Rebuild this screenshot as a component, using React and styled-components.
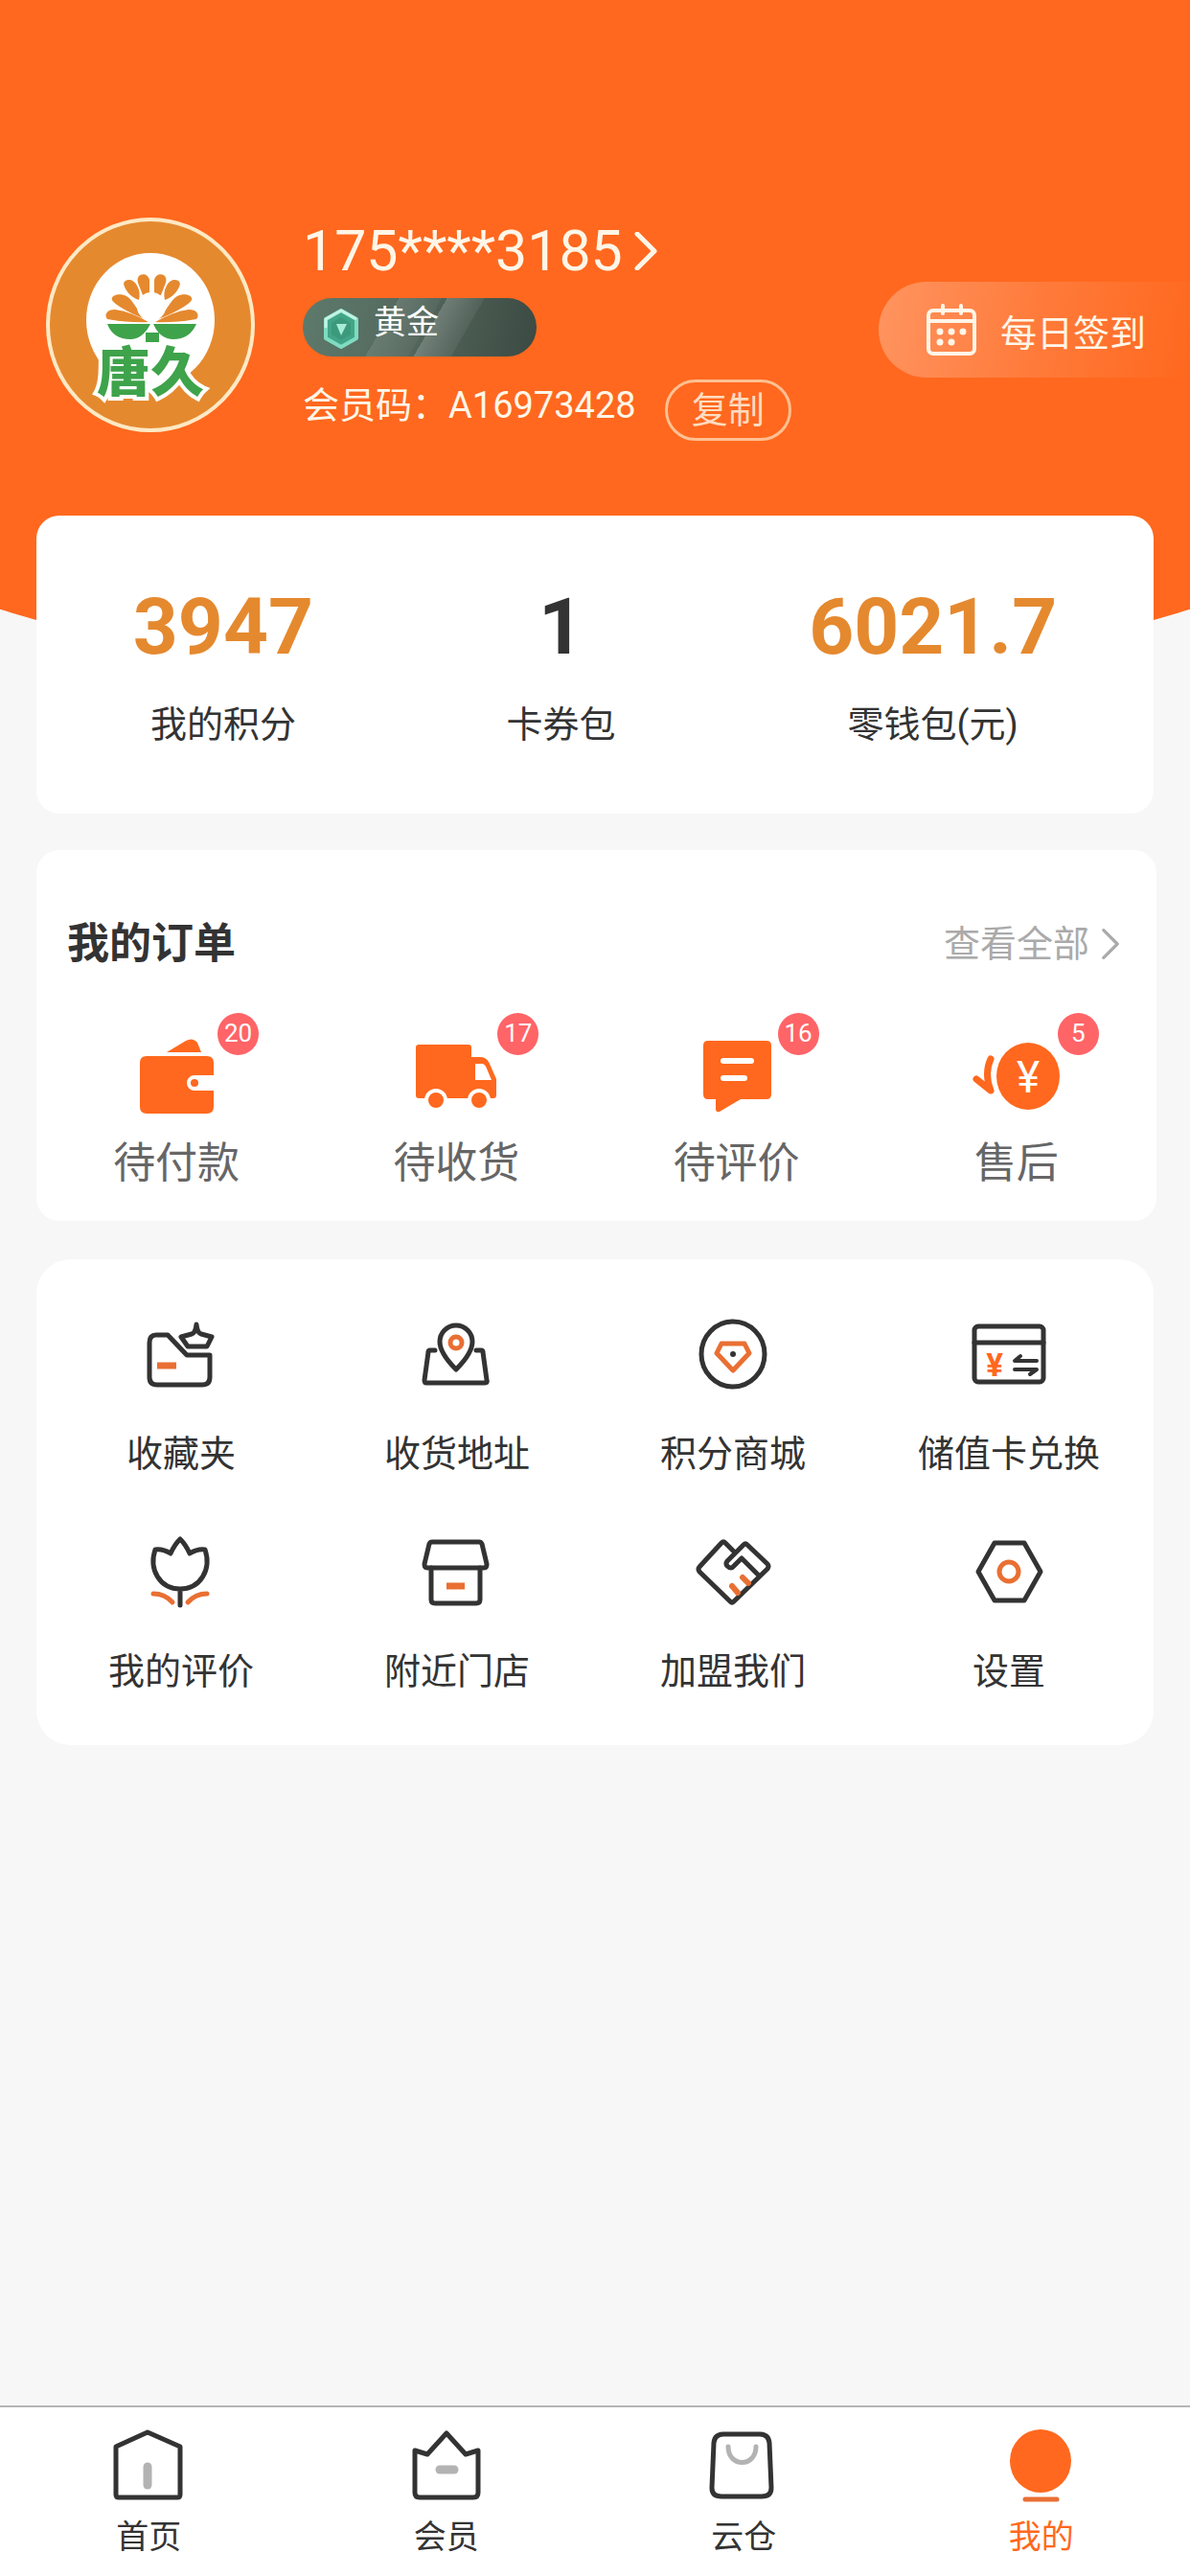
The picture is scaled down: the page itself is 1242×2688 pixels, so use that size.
import styled, { createGlobalStyle } from 'styled-components';

const GlobalStyle = createGlobalStyle`
  * {
    box-sizing: border-box;
  }

  body {
    margin: 0;
    background: #f7f7f7;
    color: #333;
    font-family: Roboto, 'Noto Sans CJK SC', sans-serif;
    font-size: 38px;
  }

  a {
    color: inherit;
    text-decoration: none;
  }

  button {
    padding: 0;
    border: 0;
    background: none;
    color: inherit;
    font: inherit;
    cursor: pointer;
  }

  svg {
    display: block;
    flex: none;
  }
`;

const Page = styled.div`
  display: flex;
  flex-direction: column;
  min-height: 100vh;
`;

const Hero = styled.header`
  display: flex;
  align-items: flex-start;
  padding: 227px 0 265px 48px;
  background: #ff681e;
  color: #fff6e8;
  clip-path: ellipse(104% 100% at 50% 0);
`;

const Info = styled.div`
  margin-left: 50px;
  padding-top: 2px;
`;

const Phone = styled.a`
  display: flex;
  align-items: center;
  gap: 12px;
  font-size: 59px;
  line-height: 66px;
`;

const Level = styled.div`
  display: flex;
  align-items: flex-start;
  gap: 13px;
  width: 244px;
  height: 61px;
  margin: 16px 0 24px;
  padding-left: 20px;
  border-radius: 31px;
  background:
    linear-gradient(120deg, transparent 36%, rgba(255, 255, 255, 0.1) 36%, rgba(255, 255, 255, 0.04) 52%, transparent 52%),
    linear-gradient(120deg, transparent 54%, rgba(255, 255, 255, 0.18) 54%, rgba(255, 255, 255, 0.06) 68%, transparent 68%),
    linear-gradient(100deg, #5d7a6c, #55685e 45%, #3b4a42);
  color: #fff;
  font-size: 34px;
  line-height: 50px;

  svg {
    margin-top: 9px;
  }
`;

const CodeRow = styled.div`
  display: flex;
  align-items: flex-start;
  gap: 30px;
  line-height: 54px;
`;

const CopyButton = styled.button`
  width: 132px;
  height: 64px;
  border: 3px solid #ffc093;
  border-radius: 32px;
  color: #ffdcc0;
`;

const SignIn = styled.button`
  display: flex;
  align-items: center;
  gap: 24px;
  height: 100px;
  margin: 67px 0 0 auto;
  padding: 0 46px 0 49px;
  border-radius: 50px 0 0 50px;
  background: linear-gradient(100deg, #ff9460, #ff7b3b 50%, #ff681e);
`;

const Card = styled.section`
  margin: 0 38px;
  border-radius: ${({ $radius = 24 }) => $radius}px;
  background: #fff;
`;

const StatsCard = styled(Card)`
  position: relative;
  display: flex;
  justify-content: space-around;
  margin-top: -187px;
  padding: 76px 0 71px;
`;

const Stat = styled.a`
  display: flex;
  flex-direction: column;
  align-items: center;
  gap: 40px;
  line-height: 44px;
`;

const StatValue = styled.strong`
  color: ${({ $color }) => $color};
  font-size: 82px;
  line-height: 80px;
`;

const OrdersCard = styled(Card)`
  margin: 38px 35px 0 38px;
  padding: 68px 0 30px;
`;

const OrdersHead = styled.div`
  display: flex;
  justify-content: space-between;
  align-items: center;
  padding: 0 38px 0 32px;
  line-height: 60px;
`;

const OrdersTitle = styled.h2`
  margin: 0;
  font-size: 44px;
`;

const MoreLink = styled.a`
  display: flex;
  align-items: center;
  gap: 12px;
  color: #aaa;
`;

const Columns = styled.nav`
  display: grid;
  grid-template-columns: repeat(4, 1fr);
`;

const OrderColumns = styled(Columns)`
  margin-top: 65px;
`;

const OrderItem = styled.a`
  display: flex;
  flex-direction: column;
  align-items: center;
  gap: 20px;
  color: #666;
  font-size: 44px;
  line-height: 60px;
`;

const OrderIcon = styled.span`
  position: relative;
`;

const Badge = styled.span`
  position: absolute;
  top: -23px;
  left: 91px;
  width: 43px;
  height: 44px;
  border-radius: 50%;
  background: #ff6467;
  color: #fff;
  font-size: 26px;
  line-height: 42px;
  text-align: center;
`;

const ServicesCard = styled(Card)`
  margin-top: 40px;
  padding: 59px 7px 52px;
`;

const ServiceColumns = styled(Columns)`
  row-gap: 58px;
`;

const ServiceItem = styled.a`
  display: flex;
  flex-direction: column;
  align-items: center;
  gap: 39px;
  line-height: 50px;
`;

const TabBar = styled(Columns)`
  margin-top: auto;
  padding: 18px 0;
  border-top: 2px solid #b5b5b5;
  background: #fff;
`;

const Tab = styled.a`
  display: flex;
  flex-direction: column;
  align-items: center;
  gap: 10px;
  color: ${({ $active }) => ($active ? '#ff681e' : '#333')};
  font-size: 34px;
  line-height: 46px;
`;

const Chevron = ({ width, height, stroke }) => (
  <svg width={width} height={height} viewBox="0 0 24 40" fill="none" stroke="currentColor" strokeWidth={stroke}>
    <path d="M3 2 21 20 3 38" strokeLinecap="round" strokeLinejoin="round" />
  </svg>
);

const Logo = () => (
  <svg width="218" height="224" viewBox="0 0 218 224" role="img" aria-label="唐久">
    <ellipse cx="109" cy="112" rx="107" ry="110" fill="#e5892f" stroke="#ffe9c4" strokeWidth="4" />
    <ellipse cx="109" cy="107" rx="67" ry="70" fill="#fff" />
    <g fill="#e5892f">
      {[1, -1].map((side) => (
        <g key={side} transform={side === 1 ? undefined : 'translate(221 0) scale(-1 1)'}>
          <path d="M101 81 96 68C93 58 106 56 108 65L108 81Z" />
          <path d="M97 86C88 83 82 75 81 69 82 64 91 63 95 71Q99 78 97 86Z" />
          <path d="M104 106C90 101 71 91 69 86 67 81 77 78 84 82 91 86 94 96 104 106Z" />
          <path d="M107 109Q88 110 64 106C60 101 64 96 72 96Q88 98 107 109Z" />
        </g>
      ))}
    </g>
    <circle cx="110" cy="93" r="15" fill="#fff" />
    <g fill="#3ea34a">
      <path d="M64 111H109Q101 127 88 127 70 127 64 111ZM112 111H157Q150 127 133 127 119 127 112 111Z" />
      <path d="M104 120H118V130H104Z" />
    </g>
    <text
      x="53"
      y="181"
      fontFamily="'Noto Sans CJK SC', sans-serif"
      fontSize="56"
      fontWeight="900"
      fill="#3ea34a"
      stroke="#fff"
      strokeWidth="8"
      paintOrder="stroke"
    >
      唐久
    </text>
  </svg>
);

const LevelGem = () => (
  <svg width="41" height="46" viewBox="0 0 41 46">
    <path d="M20 4 36 13V33L20 42 4 33V13Z" fill="#43a587" stroke="#7fdcc0" strokeWidth="4" strokeLinejoin="round" />
    <path d="M4 22V13L20 4 36 13" fill="none" stroke="#c5f3e5" strokeWidth="3" strokeLinejoin="round" />
    <path d="M20 11 30 17V29L20 35 10 29V17Z" fill="#3c9a7c" />
    <path d="M15 18 26 18 20 30Z" fill="#a8ecd8" />
  </svg>
);

const CalendarIcon = () => (
  <svg width="54" height="54" viewBox="0 0 54 54" fill="none" stroke="currentColor" strokeWidth="4">
    <rect x="3" y="7" width="48" height="45" rx="5" />
    <path d="M3 18H51M18 2V10M37 2V10" strokeLinecap="round" />
    <g fill="currentColor" stroke="none">
      <circle cx="15" cy="29" r="3.5" />
      <circle cx="27" cy="29" r="3.5" />
      <circle cx="39" cy="29" r="3.5" />
      <circle cx="15" cy="40" r="3.5" />
      <circle cx="27" cy="40" r="3.5" />
    </g>
  </svg>
);

const ORANGE = '#ff681e';
const ACCENT = '#e96f33';
const GREY = '#b3b3b3';

const orders = [
  {
    label: '待付款',
    count: 20,
    icon: (
      <>
        <path d="M38 18 58 6Q65 2 70 8L74 18Z" />
        <path d="M17 22H80Q87 22 87 29V42H67A8 8 0 0 0 67 58H87V75Q87 82 80 82H17Q10 82 10 75V29Q10 22 17 22Z" />
        <circle cx="67" cy="50" r="4" />
      </>
    ),
  },
  {
    label: '待收货',
    count: 17,
    icon: (
      <>
        <path d="M9 10H61Q64 10 64 13V23H73Q80 23 83 30L90 46V63Q90 66 87 66H9Q6 66 6 63V13Q6 10 9 10Z" />
        <path d="M68 30H75Q78 30 80 35L85 47H68Z" fill="#fff" />
        <circle cx="27" cy="68" r="10" stroke="#fff" strokeWidth="4" />
        <circle cx="72" cy="68" r="10" stroke="#fff" strokeWidth="4" />
      </>
    ),
  },
  {
    label: '待评价',
    count: 16,
    icon: (
      <>
        <path d="M18 6H79Q84 6 84 11V62Q84 67 79 67H52L30 80Q26 81 26 77V67H18Q13 67 13 62V11Q13 6 18 6Z" />
        <path d="M34 27H63M34 45H56" stroke="#fff" strokeWidth="6" strokeLinecap="round" />
      </>
    ),
  },
  {
    label: '售后',
    count: 5,
    icon: (
      <>
        <ellipse cx="60" cy="43" rx="33" ry="35" />
        <path
          d="M21 25Q14 40 21 58L6 46"
          fill="none"
          stroke={ORANGE}
          strokeWidth="7"
          strokeLinecap="round"
          strokeLinejoin="round"
        />
        <text x="60" y="60" fill="#fff" fontSize="46" textAnchor="middle">
          ¥
        </text>
      </>
    ),
  },
];

const services = [
  {
    label: '收藏夹',
    icon: (
      <>
        <path d="M14 20H26L46 41H70V64Q70 72 62 72H15Q7 72 7 64V28Q7 20 14 20Z" />
        <path d="M56 9Q57 18 61 19L72 22 67 32H47L40 22 51 19Q55 18 56 9Z" />
        <path d="M15 52H35" stroke={ACCENT} strokeWidth="7" strokeLinecap="butt" />
      </>
    ),
  },
  {
    label: '收货地址',
    icon: (
      <>
        <path d="M39 56Q22 39 22 27A17 17 0 0 1 56 27Q56 39 39 56Z" />
        <path d="M17 36H12Q10 36 10 38L6 67Q6 70 8 70H69Q72 70 71 67L67 38Q67 36 65 36H60" />
        <circle cx="39" cy="28" r="6" stroke={ACCENT} />
      </>
    ),
  },
  {
    label: '积分商城',
    icon: (
      <>
        <ellipse cx="40" cy="40" rx="33" ry="34" />
        <path d="M28 29H52L57 39 40 57 23 39Z" stroke={ACCENT} />
        <circle cx="40" cy="40" r="3" fill="#333" stroke="none" />
      </>
    ),
  },
  {
    label: '储值卡兑换',
    icon: (
      <>
        <rect x="4" y="11" width="72" height="58" rx="4" />
        <path d="M4 28H76" />
        <path d="M69 47H46L52 42M46 56H69L62 61" strokeWidth="4" />
        <text x="25" y="63" fill={ORANGE} stroke="none" fontSize="33" fontWeight="700" textAnchor="middle">
          ¥
        </text>
      </>
    ),
  },
  {
    label: '我的评价',
    icon: (
      <>
        <path d="M39 75V58C18 58 6 38 13 17Q21 16 29 21 33 12 39 6 45 12 49 21 57 16 65 17C72 38 60 58 39 58" />
        <path d="M11 63Q23 63 31 72M67 63Q55 63 47 72" stroke={ACCENT} />
      </>
    ),
  },
  {
    label: '附近门店',
    icon: (
      <>
        <path d="M14 9H63Q65 9 66 11L71 32Q71 36 68 36H9Q6 36 6 32L11 11Q12 9 14 9Z" />
        <path d="M13 36V69Q13 73 17 73H60Q64 73 64 69V36" />
        <path d="M29 55H48" stroke={ACCENT} strokeWidth="7" strokeLinecap="butt" />
      </>
    ),
  },
  {
    label: '加盟我们',
    icon: (
      <>
        <path d="M42 20 32 10Q30 8 28 10L5 35Q3 37 5 40L37 71Q39 73 41 71L76 37Q78 34 76 32L55 12Q53 10 51 12L34 29Q32 32 34 34 38 38 41 34L49 26 66 43" />
        <path d="M39 55 45 62M50 46 56 52" stroke={ACCENT} strokeWidth="6" />
      </>
    ),
  },
  {
    label: '设置',
    icon: (
      <>
        <path d="M25 10H56L73 40 56 70H25L8 40Z" />
        <circle cx="40" cy="40" r="10" stroke={ACCENT} />
      </>
    ),
  },
];

const tabs = [
  {
    label: '首页',
    icon: (
      <>
        <path d="M39 8 73 23V73Q73 76 70 76H9Q6 76 6 73V23Z" />
        <path d="M39 44V63" stroke={GREY} strokeWidth="9" />
      </>
    ),
  },
  {
    label: '会员',
    icon: (
      <>
        <path d="M7 27 20 31 40 9 60 31 73 27V71Q73 76 68 76H12Q7 76 7 71Z" />
        <path d="M33 47H48" stroke={GREY} strokeWidth="9" />
      </>
    ),
  },
  {
    label: '云仓',
    icon: (
      <>
        <path d="M19 10H57Q66 10 67 19L69 66Q69 75 59 75H17Q7 75 7 66L9 19Q10 10 19 10Z" />
        <path d="M24 23C24 45 53 45 53 23" stroke={GREY} />
      </>
    ),
  },
  {
    label: '我的',
    active: true,
    icon: (
      <>
        <ellipse cx="39" cy="38" rx="32" ry="33" fill={ORANGE} stroke="none" />
        <path d="M23 78H56" stroke={ACCENT} />
      </>
    ),
  },
];

const LineIcon = ({ height = 80, children }) => (
  <svg
    width="80"
    height={height}
    viewBox={`0 0 80 ${height}`}
    fill="none"
    stroke="#333"
    strokeWidth="5"
    strokeLinecap="round"
    strokeLinejoin="round"
  >
    {children}
  </svg>
);

export default function App() {
  return (
    <Page>
      <GlobalStyle />
      <Hero>
        <Logo />
        <Info>
          <Phone href="#profile">
            175****3185
            <Chevron width={24} height={40} stroke={5} />
          </Phone>
          <Level>
            <LevelGem />
            黄金
          </Level>
          <CodeRow>
            <span>会员码：A16973428</span>
            <CopyButton type="button">复制</CopyButton>
          </CodeRow>
        </Info>
        <SignIn type="button">
          <CalendarIcon />
          每日签到
        </SignIn>
      </Hero>

      <StatsCard>
        <Stat href="#points">
          <StatValue $color="#e5892f">3947</StatValue>
          我的积分
        </Stat>
        <Stat href="#coupons">
          <StatValue $color="#333">1</StatValue>
          卡券包
        </Stat>
        <Stat href="#wallet">
          <StatValue $color="#e5892f">6021.7</StatValue>
          零钱包(元)
        </Stat>
      </StatsCard>

      <OrdersCard>
        <OrdersHead>
          <OrdersTitle>我的订单</OrdersTitle>
          <MoreLink href="#orders">
            查看全部
            <Chevron width={20} height={32} stroke={4} />
          </MoreLink>
        </OrdersHead>
        <OrderColumns>
          {orders.map(({ label, count, icon }) => (
            <OrderItem key={label} href="#orders">
              <OrderIcon>
                <svg width="96" height="84" viewBox="0 0 96 84" fill={ORANGE}>
                  {icon}
                </svg>
                <Badge>{count}</Badge>
              </OrderIcon>
              {label}
            </OrderItem>
          ))}
        </OrderColumns>
      </OrdersCard>

      <ServicesCard $radius={36}>
        <ServiceColumns>
          {services.map(({ label, icon }) => (
            <ServiceItem key={label} href="#service">
              <LineIcon>{icon}</LineIcon>
              {label}
            </ServiceItem>
          ))}
        </ServiceColumns>
      </ServicesCard>

      <TabBar>
        {tabs.map(({ label, icon, active }) => (
          <Tab key={label} href="#tab" $active={active}>
            <LineIcon height={84}>{icon}</LineIcon>
            {label}
          </Tab>
        ))}
      </TabBar>
    </Page>
  );
}
